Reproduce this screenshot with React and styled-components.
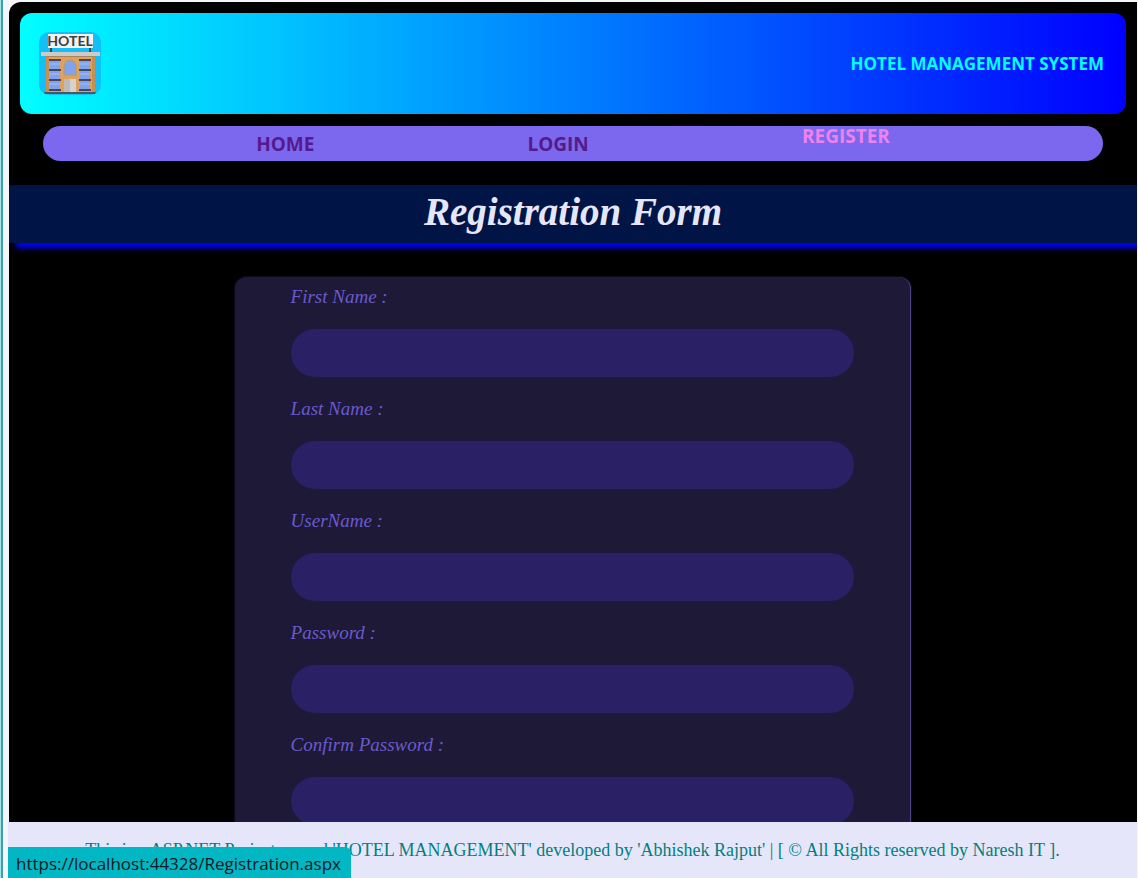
import React from "react";
import styled, { createGlobalStyle } from "styled-components";

const GlobalStyle = createGlobalStyle`
  *, *::before, *::after { box-sizing: border-box; }
  body {
    margin: 0;
    background: #f4f6f9;
    font-family: "Liberation Serif", serif;
  }
`;

const Frame = styled.div`
  height: 100vh;
  display: flex;
  flex-direction: column;
  border-left: 1px solid #a5e3e6;
  padding: 2px 1px 0 7px;
  box-shadow: inset 2px 0 0 #3f9fab;
`;

const Page = styled.div`
  flex: 1;
  min-height: 0;
  margin-left: 1px;
  overflow: hidden;
  background: #000;
  border-top-left-radius: 12px;
`;

const Banner = styled.header`
  display: flex;
  align-items: center;
  justify-content: space-between;
  height: 101px;
  margin: 11px 11px 0;
  padding: 0 22px 0 19px;
  border-radius: 12px;
  background: linear-gradient(to right, aqua, blue);
`;

const Logo = styled.svg`
  width: 62px;
  height: 63px;
  display: block;
`;

const SystemName = styled.span`
  color: aqua;
  font: 700 17px/24px "Open Sans", sans-serif;
`;

const Nav = styled.nav`
  display: flex;
  align-items: center;
  justify-content: space-evenly;
  height: 35px;
  margin: 12px 34px 24px;
  border-radius: 18px;
  background: #7b68ee;
`;

const NavLink = styled.a`
  align-self: ${(p) => (p.$active ? "flex-start" : "center")};
  color: ${(p) => (p.$active ? "violet" : "#551a8b")};
  font: 700 19px/20px "Open Sans", sans-serif;
  text-decoration: none;
`;

const Title = styled.h1`
  margin: 0;
  height: 58px;
  background: #001546;
  box-shadow: 7px 5px 5px blue;
  color: lavender;
  font: italic 700 39px/54px "Liberation Serif", serif;
  text-align: center;
`;

const Form = styled.form`
  width: 60%;
  margin: 34px auto 0;
  padding: 8px 56px 40px;
  border-right: 1px solid #4b4080;
  border-radius: 12px;
  background: #1d1936;
  box-shadow: 0 0 2px #2f2858;
`;

const Field = styled.div`
  display: flex;
  flex-direction: column;
  gap: 20px;
  margin-bottom: 20px;
`;

const Label = styled.label`
  color: #6a5acd;
  font: italic 400 19px/24px "Liberation Serif", serif;
`;

const Input = styled.input`
  width: 100%;
  height: 48px;
  padding: 0 20px;
  border: 0;
  border-radius: 24px;
  outline: none;
  background: #292066;
  color: lavender;
  font: 400 18px "Liberation Serif", serif;
`;

const Footer = styled.footer`
  height: 56px;
  background: #e6e6fa;
  color: teal;
  font: 400 18px/56px "Liberation Serif", serif;
  text-align: center;
  white-space: nowrap;
`;

const StatusBar = styled.div`
  position: fixed;
  left: 8px;
  bottom: 0;
  height: 31px;
  padding: 0 10px 0 8px;
  border-top-right-radius: 6px;
  background: #00b7c3;
  color: #101820;
  font: 400 17px/34px "Open Sans", sans-serif;
`;

const links = [
  { text: "HOME", href: "#home" },
  { text: "LOGIN", href: "#login" },
  { text: "REGISTER", href: "#register", active: true },
];

const fields = [
  { id: "first", label: "First Name :", type: "text" },
  { id: "last", label: "Last Name :", type: "text" },
  { id: "user", label: "UserName :", type: "text" },
  { id: "password", label: "Password :", type: "password" },
  { id: "confirm", label: "Confirm Password :", type: "password" },
];

function HotelLogo() {
  return (
    <Logo viewBox="0 0 62 63" role="img" aria-label="Hotel">
      <rect width="62" height="63" rx="10" fill="#12c0f8" />
      <path d="M12 14v7M51 14v7" stroke="#37474f" strokeWidth="2" />
      <rect x="9" y="2" width="45" height="14" fill="#f3f3f3" />
      <text x="31" y="14" textAnchor="middle" fontFamily="Lato, sans-serif" fontWeight="700" fontSize="14" fill="#3b4045">HOTEL</text>
      <rect x="7" y="23" width="49" height="38" fill="#dda35c" />
      <path d="M7 24h3v37H7zM53 24h3v37h-3z" fill="#c98f50" />
      <rect x="2" y="20" width="59" height="4" fill="#cfcac7" />
      <path d="M7 24h49v1H7z" fill="#a98559" />
      {[11, 41].map((x) =>
        [27, 37, 47].map((y) => (
          <g key={`${x}-${y}`}>
            <rect x={x} y={y} width="10" height="10" fill="#7fa3ee" />
            <path d={`M${x} ${y + 4}h10v2h-10z`} fill="#8fb2f4" />
            <path d={`M${x - 1} ${y}h12v2h-12z`} fill="#4a4657" />
          </g>
        ))
      )}
      <path d="M10 57h12v2H10zM40 57h12v2H40z" fill="#4a4657" />
      <path d="M25 43V34a6 6 0 0 1 12 0v9z" fill="#7fa3ee" stroke="#c3965f" />
      <rect x="25" y="47" width="12" height="14" fill="#bdbab7" />
      <path d="M31 47h6v14h-6z" fill="#d5d2cf" />
      <path d="M5 60h52l-1 2H6z" fill="#455a64" />
    </Logo>
  );
}

export default function App() {
  return (
    <>
      <GlobalStyle />
      <Frame>
        <Page>
          <Banner>
            <HotelLogo />
            <SystemName>HOTEL MANAGEMENT SYSTEM</SystemName>
          </Banner>
          <Nav>
            {links.map((l) => (
              <NavLink key={l.text} href={l.href} $active={l.active}>
                {l.text}
              </NavLink>
            ))}
          </Nav>
          <Title>Registration Form</Title>
          <Form>
            {fields.map((f) => (
              <Field key={f.id}>
                <Label htmlFor={f.id}>{f.label}</Label>
                <Input id={f.id} type={f.type} />
              </Field>
            ))}
          </Form>
        </Page>
        <Footer>
          This is a ASP.NET Project named 'HOTEL MANAGEMENT' developed by
          'Abhishek Rajput' | [ © All Rights reserved by Naresh IT ].
        </Footer>
      </Frame>
      <StatusBar>https://localhost:44328/Registration.aspx</StatusBar>
    </>
  );
}
